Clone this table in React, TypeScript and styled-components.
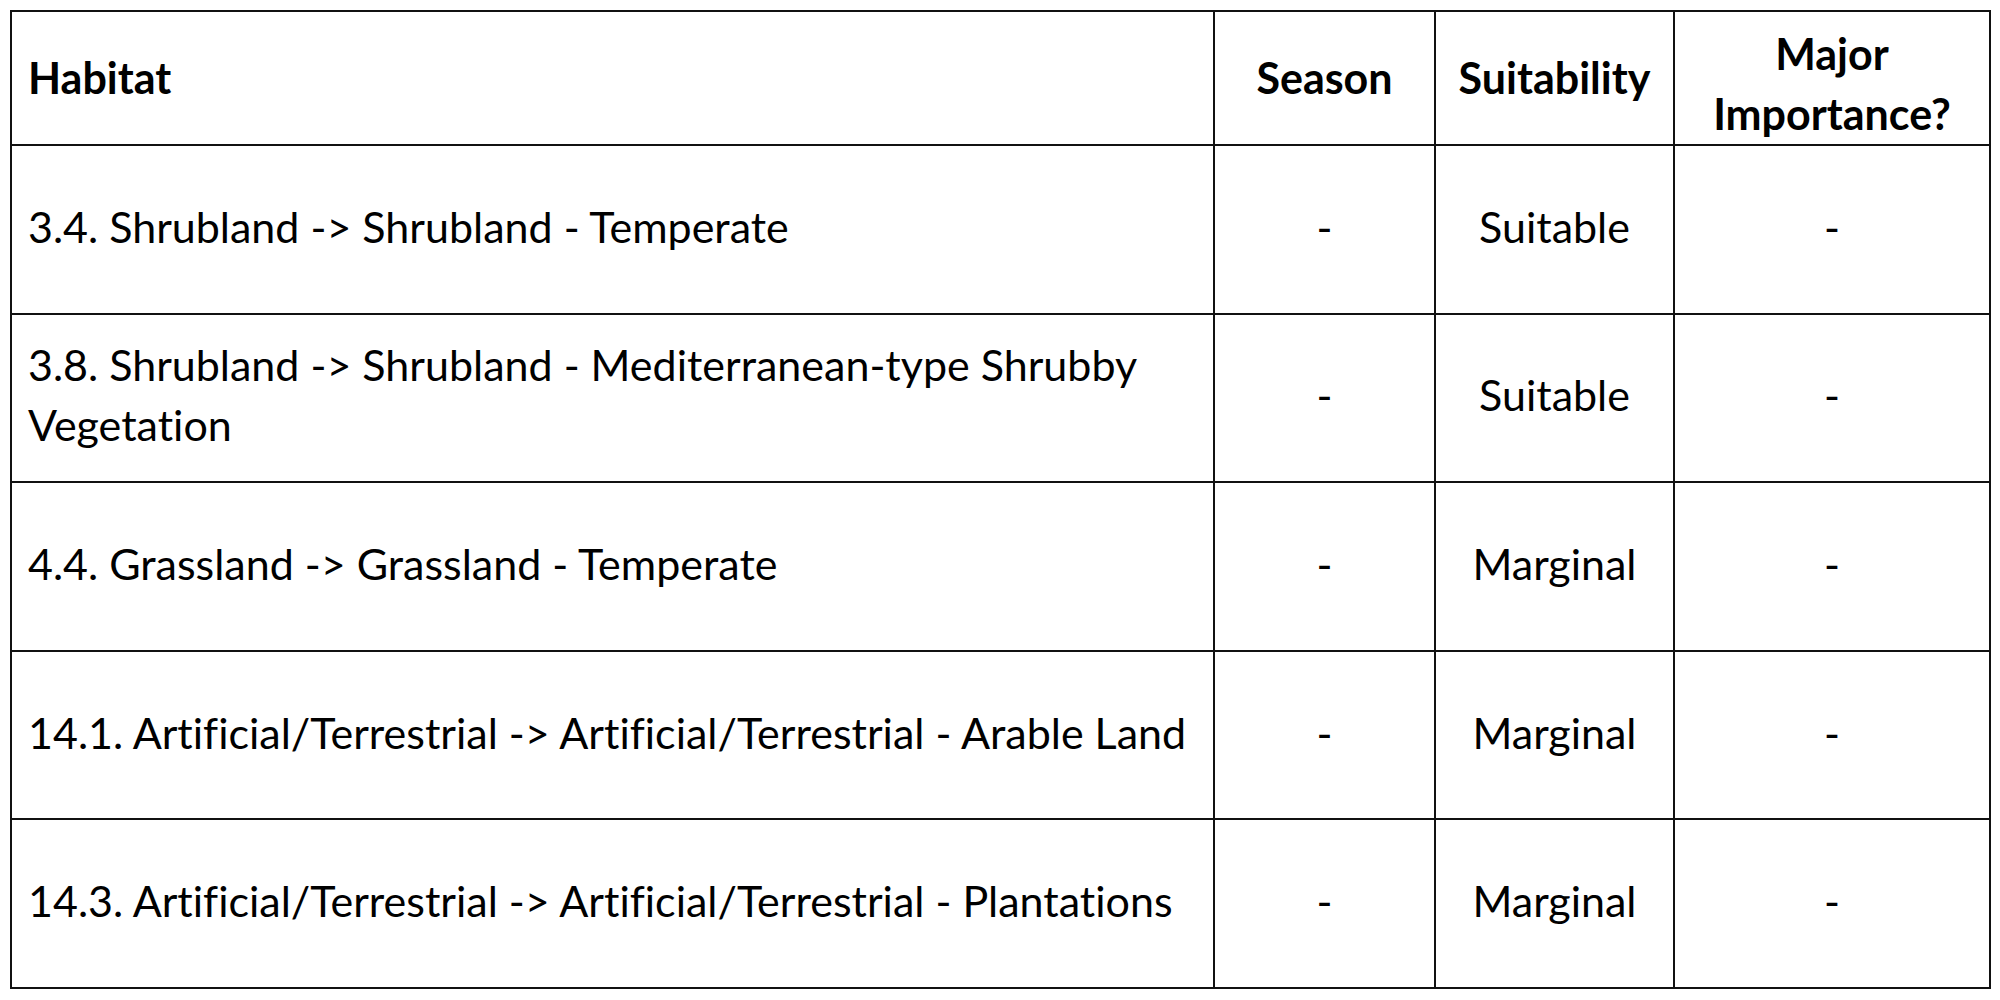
import styled, { createGlobalStyle } from 'styled-components'

const GlobalStyle = createGlobalStyle`
  html, body {
    margin: 0;
    padding: 0;
    background: #fff;
  }
  body {
    font-family: Lato, "Noto Sans", sans-serif;
    color: #000;
  }
`

type Row = {
  habitat: string
  season: string
  suitability: string
  major: string
}

const rows: Row[] = [
  { habitat: '3.4. Shrubland -> Shrubland - Temperate', season: '-', suitability: 'Suitable', major: '-' },
  { habitat: '3.8. Shrubland -> Shrubland - Mediterranean-type Shrubby Vegetation', season: '-', suitability: 'Suitable', major: '-' },
  { habitat: '4.4. Grassland -> Grassland - Temperate', season: '-', suitability: 'Marginal', major: '-' },
  { habitat: '14.1. Artificial/Terrestrial -> Artificial/Terrestrial - Arable Land', season: '-', suitability: 'Marginal', major: '-' },
  { habitat: '14.3. Artificial/Terrestrial -> Artificial/Terrestrial - Plantations', season: '-', suitability: 'Marginal', major: '-' },
]

function App() {
  return (
    <>
      <GlobalStyle />
      <Page>
        <HabitatTable>
          <colgroup>
            <col style={{ width: 1203 }} />
            <col style={{ width: 221 }} />
            <col style={{ width: 239 }} />
            <col style={{ width: 316 }} />
          </colgroup>
          <thead>
            <tr>
              <HeadCell>Habitat</HeadCell>
              <HeadCell $center>Season</HeadCell>
              <HeadCell $center>Suitability</HeadCell>
              <HeadCell $center $wrapped>Major Importance?</HeadCell>
            </tr>
          </thead>
          <tbody>
            {rows.map((r) => (
              <tr key={r.habitat}>
                <Cell>{r.habitat}</Cell>
                <Cell $center>{r.season}</Cell>
                <Cell $center>{r.suitability}</Cell>
                <Cell $center>{r.major}</Cell>
              </tr>
            ))}
          </tbody>
        </HabitatTable>
      </Page>
    </>
  )
}

const Page = styled.div`
  padding: 10px;
`

const HabitatTable = styled.table`
  width: 1981px;
  table-layout: fixed;
  border-collapse: separate;
  border-spacing: 0;
  border-top: 2px solid #111;
  border-left: 2px solid #111;
  font-size: 43px;
  line-height: 60px;
  font-variant-ligatures: none;
`

const HeadCell = styled.th<{ $center?: boolean; $wrapped?: boolean }>`
  box-sizing: border-box;
  height: 134px;
  padding: ${(p) => (p.$wrapped ? '12px 16px 0' : '0 16px')};
  border-right: 2px solid #111;
  border-bottom: 2px solid #111;
  font-weight: 700;
  text-align: ${(p) => (p.$center ? 'center' : 'left')};
  vertical-align: middle;
`

const Cell = styled.td<{ $center?: boolean }>`
  box-sizing: border-box;
  height: 168.6px;
  padding: 0 16px 5px;
  border-right: 2px solid #111;
  border-bottom: 2px solid #111;
  font-weight: 400;
  text-align: ${(p) => (p.$center ? 'center' : 'left')};
  vertical-align: middle;
`

export default App
